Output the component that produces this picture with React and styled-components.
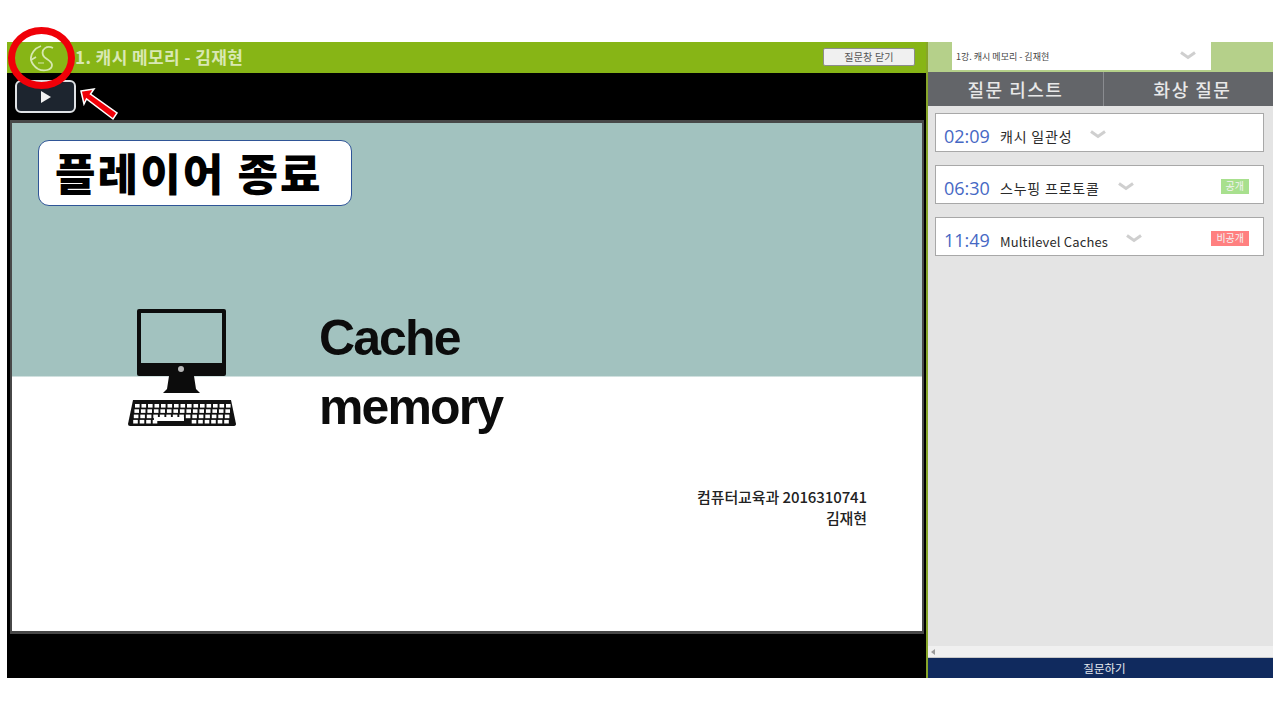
import styled, { createGlobalStyle } from "styled-components";

const GlobalStyle = createGlobalStyle`
html, body {
  margin: 0;
  padding: 0;
  background: #fff;
  font-family: "Noto Sans CJK KR", "Noto Sans", sans-serif;
}
* { box-sizing: border-box; }
`

const Pagina = styled.div`
position: relative;
width: 1280px;
height: 720px;
padding: 42px 7px 42px 7px;
overflow: hidden;
`

const Moldura = styled.div`
display: flex;
width: 1266px;
height: 636px;
`

const Player = styled.section`
display: flex;
flex-direction: column;
width: 919px;
background: #000;
`

const BarraTitulo = styled.header`
display: flex;
align-items: center;
justify-content: space-between;
height: 31px;
flex-shrink: 0;
padding: 0 11px 2px 68px;
background: #87b516;
`

const Titulo = styled.h1`
margin: 0;
font-size: 17px;
font-weight: 700;
line-height: 28px;
letter-spacing: 0.4px;
color: #d9e8b4;
`

const BotaoFechar = styled.button`
width: 92px;
height: 18px;
padding: 0;
background: #f0f0f0;
border: 1px solid #8d8d8d;
border-radius: 2px;
font-family: inherit;
font-size: 10px;
line-height: 15px;
letter-spacing: 0.2px;
color: #555;
`

const FaixaControle = styled.div`
display: flex;
align-items: flex-start;
height: 47px;
flex-shrink: 0;
padding: 7px 0 0 8px;
`

const BotaoPlay = styled.button`
display: flex;
align-items: center;
justify-content: center;
width: 61px;
height: 33px;
padding: 0;
background: #1d252f;
border: 2px solid #dfe2e5;
border-radius: 6px;
`

const Slide = styled.div`
display: flex;
flex-direction: column;
width: 914px;
height: 514px;
margin-left: 3px;
border: 2px solid #484848;
border-top-width: 3px;
border-bottom-width: 3px;
background: linear-gradient(to bottom, #a2c2bf 0, #a2c2bf 253px, #fff 254px, #fff 100%);
`

const SlideConteudo = styled.div`
display: flex;
align-items: flex-start;
gap: 82px;
padding: 185px 0 0 115px;
`

const TituloSlide = styled.div`
display: flex;
flex-direction: column;
gap: 9px;
font-family: "Liberation Sans", Arial, sans-serif;
font-size: 50px;
font-weight: 700;
line-height: 60px;
letter-spacing: -1.9px;
color: #0c0c0c;
`

const Autor = styled.div`
margin: 49px 55px 0 0;
font-size: 15px;
font-weight: 500;
line-height: 21px;
letter-spacing: -0.1px;
text-align: right;
color: #222;
`

const Lateral = styled.aside`
display: flex;
flex-direction: column;
width: 347px;
border-left: 2px solid #87a52a;
background: #e4e4e4;
`

const BarraSeletor = styled.div`
height: 30px;
flex-shrink: 0;
padding-left: 24px;
background: #b5d08a;
`

const Seletor = styled.div`
display: flex;
align-items: center;
width: 259px;
height: 28px;
padding-left: 4px;
background: #fff;
font-size: 9px;
color: #444;
`

const Abas = styled.nav`
display: flex;
height: 34px;
flex-shrink: 0;
background: #636569;
`

const Aba = styled.div`
display: flex;
align-items: center;
justify-content: center;
width: ${(p) => p.$largura}px;
padding-left: ${(p) => (p.$divisor ? 8 : 0)}px;
border-left: ${(p) => (p.$divisor ? "1px solid #8a8c90" : "none")};
font-size: 18px;
font-weight: 500;
letter-spacing: 1.5px;
color: #e8e8e8;
`

const Lista = styled.div`
display: flex;
flex-direction: column;
flex: 1;
gap: 13px;
padding: 7px 0 0 7px;
`

const Cartao = styled.div`
position: relative;
display: flex;
align-items: center;
width: 329px;
height: 39px;
padding: 6px 0 0 8px;
background: #fff;
border: 1px solid #a8a8a8;
`

const Tempo = styled.span`
width: 56px;
flex-shrink: 0;
font-family: "Open Sans", sans-serif;
font-size: 18px;
color: #4668c4;
`

const Pergunta = styled.span`
margin-top: ${(p) => (p.$latino ? 3 : 0)}px;
font-size: ${(p) => (p.$latino ? 13 : 14)}px;
letter-spacing: ${(p) => (p.$latino ? 0.15 : 0.8)}px;
color: #2a2a2a;
`

const Seta = styled.svg`
flex-shrink: 0;
margin: 0 0 2px ${(p) => p.$margem}px;
`

const Selo = styled.span`
position: absolute;
top: 13px;
right: 14px;
height: 15px;
padding: 0 5px;
background: ${(p) => (p.$aberto ? "#a8e08e" : "#ff8080")};
font-size: 10px;
line-height: 14px;
color: #f4f4f4;
`

const BarraRolagem = styled.div`
display: flex;
align-items: center;
height: 12px;
flex-shrink: 0;
padding-left: 3px;
background: #f0f0f0;
border-bottom: 1px solid #c8c8c8;
`

const BotaoPerguntar = styled.button`
height: 20px;
flex-shrink: 0;
padding: 0 0 0 8px;
background: #102a5e;
border: 0;
font-family: inherit;
font-size: 11.5px;
line-height: 20px;
color: #e6e9ef;
`

/* sobreposicoes da anotacao */
const CirculoVermelho = styled.div`
position: absolute;
left: 8px;
top: 27px;
width: 67px;
height: 62px;
border: 7px solid #f00008;
border-radius: 50%;
display: flex;
align-items: center;
justify-content: center;
`

const SetaVermelha = styled.svg`
position: absolute;
left: 78px;
top: 86px;
`

const Balao = styled.div`
position: absolute;
left: 38px;
top: 140px;
display: flex;
align-items: center;
width: 314px;
height: 66px;
padding: 0 0 2px 16px;
background: #fff;
border: 1px solid #2f5597;
border-radius: 11px;
font-size: 44px;
font-weight: 900;
letter-spacing: 2.1px;
white-space: nowrap;
color: #000;
`

function Chevron({ margem }) {
    return (
        <Seta $margem={margem} width="16" height="9" viewBox="0 0 16 9">
            <path d="M1 1.5 L8 6.5 L15 1.5" fill="none" stroke="#cfcfcf" strokeWidth="3" />
        </Seta>
    )
}

function Logo() {
    return (
        <svg width="24" height="27" viewBox="0 0 24 27" fill="none" stroke="#d6e8b0" strokeWidth="1.8">
            <path d="M11 1 C5 3 0 9 1 15 C2 19 5 22 8 24" />
            <path d="M1 15 L6 12" />
            <path d="M23 3 C17 0 11 4 13 10 C14 14 22 15 22 20 C22 25 14 27 8 24" />
            <path d="M8 18 H14" strokeWidth="1" />
        </svg>
    )
}

function Computador() {
    const teclas = []
    for (let l = 0; l < 4; l++) {
        for (let c = 0; c < 15; c++) {
            if (l === 3 && c > 3 && c < 9) continue
            teclas.push(<rect key={l + "-" + c} x={5 + c * 6.5 - l * 0.6} y={4 + l * 5.3} width="4.6" height="3.6" fill="#fff" />)
        }
    }
    return (
        <svg width="110" height="120" viewBox="0 0 110 120">
            <rect x="10" y="1" width="89" height="67" rx="2" fill="#0c0c0c" />
            <rect x="14" y="5" width="81" height="50" fill="#a2c2bf" />
            <circle cx="54" cy="61" r="3" fill="#b8b8b8" />
            <path d="M42 68 H67 L69 81 L73 85 H36 L40 81 Z" fill="#0c0c0c" />
            <path d="M6 92 H104 L109 116 Q109 118 106 118 H3 Q1 118 1 116 Z" fill="#111" />
            <g transform="translate(3 92)">{teclas}</g>
            <rect x="27" y="109" width="30" height="4" fill="#fff" />
        </svg>
    )
}

function App() {
    return (
        <Pagina>
            <GlobalStyle />
            <Moldura>
                <Player>
                    <BarraTitulo>
                        <Titulo>1. 캐시 메모리 - 김재현</Titulo>
                        <BotaoFechar>질문창 닫기</BotaoFechar>
                    </BarraTitulo>
                    <FaixaControle>
                        <BotaoPlay>
                            <svg width="12" height="12" viewBox="0 0 12 12">
                                <path d="M1 0 L11 6 L1 12 Z" fill="#f2f2f2" />
                            </svg>
                        </BotaoPlay>
                    </FaixaControle>
                    <Slide>
                        <SlideConteudo>
                            <Computador />
                            <TituloSlide>
                                <span>Cache</span>
                                <span>memory</span>
                            </TituloSlide>
                        </SlideConteudo>
                        <Autor>
                            컴퓨터교육과 2016310741
                            <br />
                            김재현
                        </Autor>
                    </Slide>
                </Player>
                <Lateral>
                    <BarraSeletor>
                        <Seletor>
                            1강. 캐시 메모리 - 김재현
                            <Chevron margem={131} />
                        </Seletor>
                    </BarraSeletor>
                    <Abas>
                        <Aba $largura={175}>질문 리스트</Aba>
                        <Aba $largura={170} $divisor>화상 질문</Aba>
                    </Abas>
                    <Lista>
                        <Cartao>
                            <Tempo>02:09</Tempo>
                            <Pergunta>캐시 일관성</Pergunta>
                            <Chevron margem={18} />
                        </Cartao>
                        <Cartao>
                            <Tempo>06:30</Tempo>
                            <Pergunta>스누핑 프로토콜</Pergunta>
                            <Chevron margem={18} />
                            <Selo $aberto>공개</Selo>
                        </Cartao>
                        <Cartao>
                            <Tempo>11:49</Tempo>
                            <Pergunta $latino>Multilevel Caches</Pergunta>
                            <Chevron margem={18} />
                            <Selo>비공개</Selo>
                        </Cartao>
                    </Lista>
                    <BarraRolagem>
                        <svg width="4" height="6" viewBox="0 0 4 6">
                            <path d="M4 0 L0 3 L4 6 Z" fill="#9a9a9a" />
                        </svg>
                    </BarraRolagem>
                    <BotaoPerguntar>질문하기</BotaoPerguntar>
                </Lateral>
            </Moldura>
            <CirculoVermelho>
                <Logo />
            </CirculoVermelho>
            <SetaVermelha width="42" height="36" viewBox="0 0 42 36">
                <path d="M3 5 L16 3 L12.5 8 L39 27 L35 33 L8.5 13 L6 18 Z" fill="#f00008" stroke="#fff" strokeWidth="1.5" />
            </SetaVermelha>
            <Balao>플레이어 종료</Balao>
        </Pagina>
    )
}

export default App
